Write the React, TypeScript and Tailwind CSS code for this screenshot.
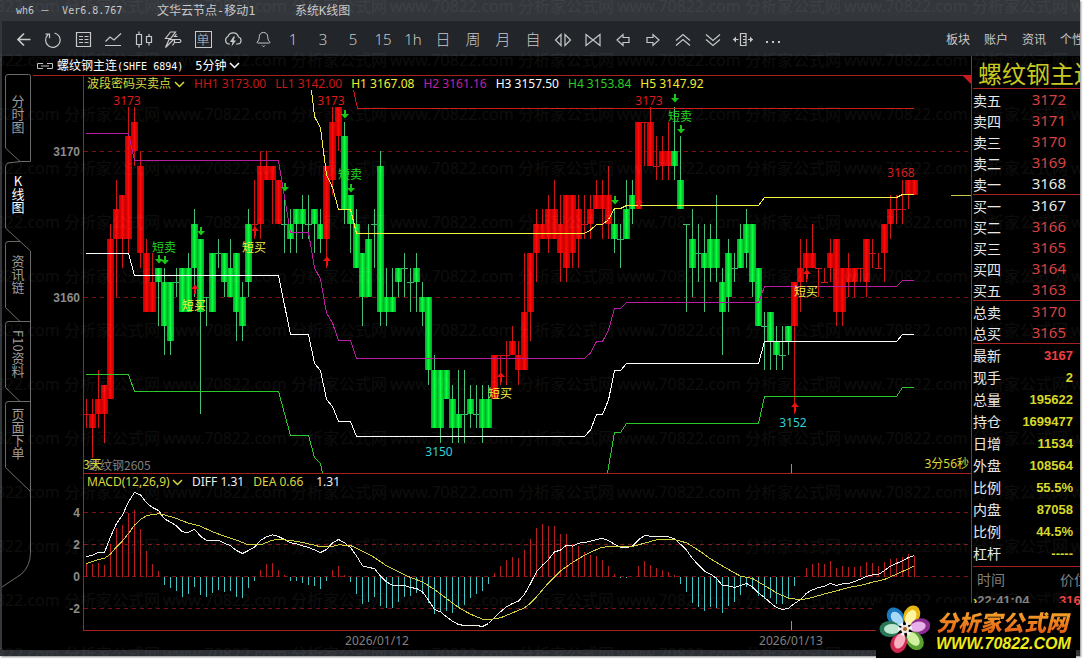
import * as React from "react"
import { Bell } from "lucide-react"

// [side, body top, body bottom, high, low]
type Candle = [string, number, number, number, number]

const CANDLES: Candle[] = [
  ["r", 52, 52, 53, 51], ["r", 52, 51, 53, 49], ["r", 53, 52, 55, 51], ["r", 54, 52, 54, 50], ["r", 64, 53, 65, 53],
  ["r", 66, 64, 68, 60], ["r", 67, 64, 67, 62], ["r", 71, 64, 73, 63], ["r", 72, 70, 73, 69], ["r", 69, 63, 70, 62],
  ["r", 63, 59, 64, 59], ["r", 61, 59, 63, 59], ["g", 62, 61, 62, 58], ["g", 61, 58, 62, 56], ["g", 61, 57, 61, 56],
  ["g", 61, 61, 62, 60], ["g", 62, 59, 62, 59], ["g", 62, 59, 63, 59], ["g", 65, 62, 66, 60], ["g", 64, 59, 64, 52],
  ["g", 60, 60, 60, 58], ["g", 63, 59, 63, 59], ["g", 63, 63, 64, 62], ["g", 63, 61, 63, 60], ["g", 62, 60, 64, 60],
  ["g", 63, 59, 63, 57], ["g", 60, 58, 61, 57], ["g", 65, 61, 66, 60], ["r", 65, 65, 68, 64], ["r", 69, 65, 70, 64],
  ["r", 69, 68, 70, 68], ["r", 69, 68, 69, 65], ["r", 68, 65, 68, 65], ["g", 65, 65, 67, 63], ["g", 65, 64, 66, 63],
  ["g", 66, 65, 66, 63], ["g", 66, 65, 67, 64], ["g", 65, 65, 67, 64], ["g", 66, 65, 66, 63], ["g", 65, 64, 66, 63],
  ["r", 69, 64, 69, 62], ["r", 72, 68, 73, 67], ["r", 73, 71, 73, 70], ["g", 71, 66, 72, 65], ["g", 67, 65, 67, 63],
  ["g", 65, 62, 66, 62], ["g", 63, 60, 63, 58], ["g", 64, 60, 65, 60], ["g", 65, 65, 66, 62], ["g", 69, 59, 70, 58],
  ["g", 60, 59, 62, 58], ["g", 60, 59, 62, 59], ["g", 62, 61, 62, 60], ["g", 62, 62, 63, 60], ["g", 61, 61, 62, 59],
  ["g", 62, 61, 63, 59], ["g", 60, 59, 61, 58], ["g", 60, 55, 60, 54], ["g", 55, 51, 56, 51], ["g", 55, 51, 55, 50],
  ["g", 55, 53, 55, 53], ["g", 53, 51, 54, 50], ["g", 52, 51, 55, 50], ["g", 52, 52, 55, 50], ["g", 53, 52, 54, 51],
  ["g", 52, 52, 54, 51], ["g", 53, 51, 54, 50], ["g", 53, 51, 54, 51], ["r", 56, 53, 56, 53], ["r", 56, 56, 56, 54],
  ["r", 56, 56, 57, 54], ["r", 57, 56, 58, 56], ["r", 56, 55, 57, 54], ["r", 59, 55, 63, 55], ["r", 63, 59, 63, 57],
  ["r", 65, 63, 66, 61], ["r", 65, 64, 66, 64], ["r", 66, 64, 67, 63], ["r", 66, 64, 68, 64], ["r", 65, 63, 67, 61],
  ["r", 67, 62, 67, 61], ["r", 67, 63, 67, 62], ["r", 66, 64, 67, 62], ["r", 65, 65, 67, 64], ["r", 66, 65, 67, 64],
  ["r", 67, 66, 68, 66], ["r", 67, 66, 68, 64], ["r", 67, 65, 69, 64], ["g", 65, 64, 66, 63], ["g", 64, 64, 65, 62],
  ["g", 66, 64, 68, 64], ["g", 67, 66, 68, 65], ["r", 72, 66, 72, 66], ["r", 72, 72, 72, 69], ["r", 72, 69, 73, 69],
  ["r", 69, 69, 71, 68], ["r", 70, 69, 71, 68], ["r", 70, 69, 72, 68], ["g", 70, 69, 73, 68], ["g", 68, 66, 71, 66],
  ["g", 65, 65, 65, 59], ["g", 64, 62, 66, 60], ["g", 63, 63, 65, 61], ["g", 63, 62, 65, 59], ["g", 64, 62, 65, 61],
  ["g", 64, 62, 67, 61], ["g", 61, 59, 62, 56], ["g", 63, 60, 64, 59], ["g", 62, 62, 63, 61], ["g", 64, 62, 65, 62],
  ["g", 65, 63, 66, 62], ["g", 65, 61, 65, 60], ["g", 62, 58, 62, 58], ["g", 58, 58, 59, 55], ["g", 59, 57, 59, 55],
  ["g", 57, 56, 58, 55], ["g", 56, 56, 58, 55], ["g", 58, 57, 58, 56], ["r", 61, 58, 61, 52], ["r", 62, 61, 64, 59],
  ["r", 63, 62, 64, 61], ["r", 63, 62, 65, 62], ["r", 62, 62, 62, 60], ["r", 61, 61, 62, 61], ["r", 63, 62, 64, 61],
  ["r", 64, 59, 64, 58], ["r", 62, 59, 62, 58], ["r", 62, 61, 63, 60], ["r", 62, 61, 62, 60], ["r", 62, 62, 62, 61],
  ["r", 64, 61, 64, 60], ["r", 63, 63, 64, 62], ["r", 62, 62, 63, 62], ["r", 65, 63, 65, 61], ["r", 66, 65, 67, 64],
  ["r", 66, 66, 67, 65], ["r", 66, 66, 68, 65], ["r", 68, 67, 68, 66], ["r", 68, 67, 68, 67],
]

// channel lines
const LINES = [
  { color: "#b81ca0", points: "86,133.5 128.5,133.5 134.5,160.5 278.5,160.5 290.5,232.5 308.5,232.5 314.5,268 320.5,279 326.5,313 332.5,323 338.5,340.5 350.5,340.5 356.5,358.5 584.5,358.5 590.5,353 596.5,341.5 602.5,341.5 608.5,330 614.5,308.5 620.5,308.5 626.5,302.5 758.5,302.5 764.5,286.5 896.5,286.5 902.5,280.5 914,280.5" },
  { color: "#ffffff", points: "86,253.5 128.5,253.5 134.5,275.5 278.5,275.5 290.5,334.5 308.5,334.5 314.5,363.5 320.5,370.5 326.5,399.5 332.5,406.5 338.5,421.5 350.5,421.5 356.5,436.5 584.5,436.5 590.5,430 596.5,414.5 602.5,414.5 608.5,400 614.5,370.5 620.5,370.5 626.5,363.5 758.5,363.5 764.5,341.5 896.5,341.5 902.5,334.5 914,334.5" },
  { color: "#28c828", points: "86,374.5 128.5,374.5 134.5,391.5 278.5,391.5 290.5,435.5 308.5,435.5 314.5,457.5 320.5,463.5 322.5,473" },
  { color: "#28c828", points: "607.5,473 614.5,432.5 620.5,432.5 626.5,423.5 758.5,423.5 764.5,396.5 896.5,396.5 902.5,387.5 914,387.5" },
  { color: "#f4f040", points: "311.5,90 314.5,116.5 320.5,128 326.5,175 332.5,187.5 338.5,209.5 350.5,209.5 356.5,233.5 584.5,233.5 590.5,230 596.5,224.5 602.5,224.5 608.5,219.5 614.5,208.5 620.5,208.5 626.5,205.5 758.5,205.5 764.5,197.5 896.5,197.5 902.5,194.5 914,194.5" },
  { color: "#d01818", points: "353.5,90 357.5,108.5 914,108.5" },
]

// MACD series, zero axis at 409, 48 units per point
const ZERO = 409
const HIST = [
  372, 372, 367, 375, 310, 262, 255, 217, 210, 265, 333, 370, 393, 434, 443, 453, 471, 461, 440, 465, 471, 458, 448, 455,
  452, 470, 474, 443, 422, 390, 372, 369, 390, 404, 422, 422, 429, 435, 437, 446, 422, 390, 378, 404, 426, 461, 491, 486,
  471, 497, 504, 503, 486, 470, 466, 458, 461, 487, 521, 516, 513, 518, 504, 494, 473, 461, 452, 431, 399, 378, 360, 351,
  353, 330, 295, 263, 252, 257, 257, 282, 282, 312, 318, 336, 345, 348, 358, 378, 400, 413, 413, 409, 378, 363, 375, 384,
  389, 396, 405, 432, 455, 489, 500, 513, 500, 502, 518, 498, 486, 465, 440, 447, 468, 477, 474, 490, 492, 473, 438, 409,
  384, 372, 369, 372, 363, 384, 378, 381, 381, 378, 366, 369, 378, 366, 356, 353, 351, 342, 348,
]
const DIFF = [
  349, 345, 337, 337, 290, 250, 225, 185, 157, 164, 188, 202, 211, 236, 246, 257, 275, 277, 267, 288, 301, 301, 301, 309,
  317, 331, 340, 331, 321, 301, 290, 284, 289, 298, 308, 311, 317, 322, 329, 337, 328, 308, 298, 308, 322, 347, 377, 382,
  385, 408, 425, 436, 436, 436, 442, 445, 455, 480, 508, 515, 530, 543, 553, 556, 556, 556, 559, 550, 532, 515, 500, 490,
  483, 462, 430, 395, 375, 358, 335, 330, 315, 318, 309, 307, 303, 298, 295, 301, 312, 321, 322, 318, 299, 286, 288, 289,
  289, 290, 296, 312, 330, 355, 375, 393, 402, 415, 436, 437, 442, 436, 430, 440, 458, 472, 488, 502, 508, 504, 490, 478,
  459, 449, 442, 438, 430, 436, 431, 430, 424, 417, 409, 404, 403, 391, 378, 370, 362, 352, 346,
]
const DEA: [number, number][] = [
  [0, 370], [1, 364], [2, 358], [3, 354], [4, 342], [5, 320], [6, 302], [7, 280], [8, 255], [9, 238], [10, 227],
  [11, 223], [12, 221], [13, 224], [15, 235], [17, 249], [19, 258], [21, 275], [23, 288], [25, 300], [27, 314],
  [29, 314], [31, 300], [32, 298], [34, 301], [36, 307], [38, 315], [39, 320], [41, 319], [42, 314], [44, 316],
  [46, 333], [48, 352], [50, 377], [52, 395], [54, 412], [56, 425], [58, 448], [60, 475], [62, 502], [64, 522],
  [66, 537], [67, 539], [69, 533], [71, 518], [73, 503], [74, 489], [75, 470], [77, 428], [79, 392], [81, 367],
  [83, 345], [85, 328], [86, 321], [88, 319], [91, 319], [93, 309], [95, 299], [98, 298], [100, 308], [102, 330],
  [104, 356], [107, 388], [109, 408], [111, 415], [113, 436], [115, 458], [117, 474], [119, 479], [121, 472],
  [123, 461], [125, 452], [127, 442], [129, 436], [131, 426], [133, 418], [135, 402], [137, 386], [138, 377],
]

const px = (i: number) => 86.5 + i * 6
const py = (p: number) => Math.round((70 - p) * 14.6 + 151)
const my = (v: number) => 576.5 + (v - ZERO) / 3

const DOWN_ARROWS = [[159, 259], [165, 260], [201, 231], [285, 187], [345, 114], [351, 188], [615, 200], [675, 98], [681, 129]]
const UP_ARROWS = [[255, 231], [327, 261], [195, 289], [501, 377], [639, 203], [807, 274], [795, 407]]

const MARKS = [
  { x: 152, y: 252, text: "短卖", color: "#20d820" },
  { x: 338, y: 179, text: "短卖", color: "#20d820" },
  { x: 668, y: 121, text: "短卖", color: "#20d820" },
  { x: 242, y: 252, text: "短买", color: "#f4f040" },
  { x: 182, y: 310, text: "短买", color: "#f4f040" },
  { x: 488, y: 398, text: "短买", color: "#f4f040" },
  { x: 794, y: 296, text: "短买", color: "#f4f040" },
]

const PRICES = [
  { x: 127, y: 105, text: "3173", color: "#d81c1c" },
  { x: 331, y: 105, text: "3173", color: "#d81c1c" },
  { x: 649, y: 105, text: "3173", color: "#d81c1c" },
  { x: 901, y: 177, text: "3168", color: "#d81c1c" },
  { x: 439, y: 456, text: "3150", color: "#30d0d8" },
  { x: 793, y: 427, text: "3152", color: "#30d0d8" },
]

const LEGEND = [
  ["HH1 3173.00", "text-[#c81818]"],
  ["LL1 3142.00", "text-[#c81818]"],
  ["H1 3167.08", "text-[#f0f030]"],
  ["H2 3161.16", "text-[#c020a8]"],
  ["H3 3157.50", "text-white"],
  ["H4 3153.84", "text-[#28d028]"],
  ["H5 3147.92", "text-[#f0f030]"],
]

const ASKS = [["卖五", "3172"], ["卖四", "3171"], ["卖三", "3170"], ["卖二", "3169"], ["卖一", "3168"]]
const BIDS = [["买一", "3167"], ["买二", "3166"], ["买三", "3165"], ["买四", "3164"], ["买五", "3163"]]
const TOTALS = [["总卖", "3170"], ["总买", "3165"]]
const STATS = [
  ["最新", "3167"], ["现手", "2"], ["总量", "195622"], ["持仓", "1699477"], ["日增", "11534"],
  ["外盘", "108564"], ["比例", "55.5%"], ["内盘", "87058"], ["比例", "44.5%"], ["杠杆", "-----"],
]

function Icon({ children }: { children: React.ReactNode }) {
  return (
    <svg width="20" height="20" viewBox="0 0 20 20" fill="none" stroke="currentColor" strokeWidth="1.2">
      {children}
    </svg>
  )
}

const TOOLS: { name: string; face: React.ReactNode }[] = [
  { name: "返回", face: <Icon><path strokeWidth="1.7" d="M17.5 9.5H5M11 3.5L5 9.5l6 6" /></Icon> },
  {
    name: "刷新",
    face: <Icon><path d="M11.5 3A7.3 7.3 0 1 1 4.9 4.8M2.5 4.2h4v4" /></Icon>,
  },
  {
    name: "报价",
    face: <Icon><path d="M3.5 2.5h14v14h-14zM6 6.5h4M11.5 6.5h4M6 9.5h4M11.5 9.5h4M6 12.5h4M11.5 12.5h4" /></Icon>,
  },
  { name: "分时", face: <Icon><path d="M2.5 11.5L7 7l4 3 7-6.5M2 15.5h16" /></Icon> },
  {
    name: "K线",
    face: <Icon><path d="M3.5 4.5h5v10h-5zM6 1.5v3M6 14.5v3M13.5 6.5h5v6h-5zM16 4v2.500M16 12.500v3" /></Icon>,
  },
  {
    name: "闪电下单",
    face: <Icon><path d="M7.5 2L2.500 8.500h4L2.500 17.500l8-8H7L12.500 2zM13.500 4L11.500 6.500h3M11.500 9.500h5.500l1 1.500-1 1.500h-5.500zM11.500 12.500L9.500 15.500" /></Icon>,
  },
  {
    name: "下单",
    face: (
      <span className="flex size-[17px] items-center justify-center border border-current text-[13px] leading-none">单</span>
    ),
  },
  {
    name: "云端",
    face: (
      <Icon>
        <path d="M7 14H5.500a4 4 0 0 1-.500-7.500 5.500 5.500 0 0 1 10.500.500 3.600 3.600 0 0 1-.500 7h-2" />
        <path d="M10.500 6.500L7 12h2.500L8.500 16.500 13 10.500h-2.500l1.500-4z" fill="currentColor" stroke="none" />
      </Icon>
    ),
  },
  { name: "预警", face: <Bell size={17} strokeWidth={1.4} /> },
  { name: "1分钟", face: "1" },
  { name: "3分钟", face: "3" },
  { name: "5分钟", face: "5" },
  { name: "15分钟", face: "15" },
  { name: "1小时", face: "1h" },
  { name: "日线", face: "日" },
  { name: "周线", face: "周" },
  { name: "月线", face: "月" },
  { name: "自定义", face: "自" },
  { name: "缩小", face: <Icon><path d="M8 4.500v11L2.500 10zM12 4.500v11l5.500-5.500z" /></Icon> },
  { name: "放大", face: <Icon><path d="M3 4.500v11L10 10zM17 4.500v11L10 10z" /></Icon> },
  { name: "左移", face: <Icon><path d="M4 10l6-5.500v3h6v5h-6v3z" /></Icon> },
  { name: "右移", face: <Icon><path d="M16 10l-6-5.500v3H4v5h6v3z" /></Icon> },
  { name: "上翻", face: <Icon><path d="M3 10.500l7-6 7 6M3 15.500l7-6 7 6" /></Icon> },
  { name: "下翻", face: <Icon><path d="M3 4.500l7 6 7-6M3 9.500l7 6 7-6" /></Icon> },
  {
    name: "间距",
    face: (
      <Icon>
        <path d="M7.500 3.500h5.500v12H7.500zM10 6.500h3M10 9.500h3M10 12.500h3M0 9.500h5.500M15 9.500h5" />
        <path d="M3 6.500v6L0 9.500zM17 6.500v6l3-3z" fill="currentColor" stroke="none" />
      </Icon>
    ),
  },
  {
    name: "更多",
    face: <Icon><path fill="currentColor" stroke="none" d="M3 11h2v2H3zM9 11h2v2H9zM15 11h2v2h-2z" /></Icon>,
  },
]

function Picker({ label, value }: { label: string; value: string }) {
  return (
    <span className="flex items-center gap-0.5">
      <select aria-label={label} className="appearance-none" defaultValue={value}>
        <option>{value}</option>
      </select>
      <svg width="11" height="7" fill="none" stroke="currentColor" strokeWidth="1.5">
        <path d="M1 1l4.500 4.500L10 1" />
      </svg>
    </span>
  )
}

function SideTabs() {
  return (
    <nav className="relative w-[33px] shrink-0 border-l-2 border-[#33363b] pt-[19px] font-['Noto_Sans_CJK_SC',sans-serif] text-[13px] leading-none text-[#9a9a9a]">
      <svg className="absolute top-0 left-0" width="31" height="594" fill="none" stroke="#6a6a6a">
        <path d="M18 105.500H28.500V20q0-1.500-2-1.500H6q-2.500 0-2.500 2.500v71L18 105.500" />
        <path d="M18 105.500L6 107q-2.500 1-2.500 4v61L28.500 195" />
        <path d="M18 185.500H6q-2.500 0-2.500 3v63L18 265.500M28.500 195v70.500H6q-2.500 0-2.500 3v63L18 345.500M28.500 265v80.500H6q-2.500 0-2.500 3v63l25 24M28.500 345v151q0 14-9 22L0 531" />
      </svg>
      <div className="relative flex flex-col gap-[2px]">
        {["分时图", "K线图", "资讯链", "F10资料", "页面下单"].map((t, i) => (
          <button
            key={t}
            type="button"
            className={
              i === 1
                ? "flex h-[78px] w-8 items-center justify-center text-white [text-orientation:upright] [writing-mode:vertical-rl]"
                : "flex h-[78px] w-8 items-center justify-center [writing-mode:vertical-rl]"
            }
          >
            {t}
          </button>
        ))}
      </div>
    </nav>
  )
}

function PriceChart() {
  return (
    <svg className="block w-full" height="398" role="img" aria-label="K线图">
      <defs>
        <linearGradient id="up">
          <stop offset="0" stopColor="#b40000" />
          <stop offset="0.5" stopColor="#ff0808" />
          <stop offset="1" stopColor="#b40000" />
        </linearGradient>
        <linearGradient id="down">
          <stop offset="0" stopColor="#00a020" />
          <stop offset="0.5" stopColor="#08ff40" />
          <stop offset="1" stopColor="#00a020" />
        </linearGradient>
      </defs>
      <g transform="translate(-33 -75)">
        <g shapeRendering="crispEdges" fill="none">
          <path d="M33 75.500H2000M83.500 75V473" stroke="#a82020" />
          <path d="M84 151.500H2000M84 297.500H2000" stroke="#7c1616" strokeDasharray="4 4" />
          <path d="M791.500 464V473" stroke="#909090" />
          <path d="M951 195.500H2000" stroke="#c8c850" />
        </g>
        <g shapeRendering="crispEdges">
          {CANDLES.map(([side, top, bottom, high, low], i) => {
            const red = side === "r"
            return (
              <g key={i}>
                <line x1={px(i)} x2={px(i)} y1={py(high)} y2={py(low)} stroke={red ? "#d01414" : "#48c078"} />
                <rect
                  x={px(i) - 3.5}
                  y={py(top)}
                  width={7}
                  height={Math.max(py(bottom) - py(top), 1)}
                  fill={top === bottom ? (red ? "#d01414" : "#30c060") : red ? "url(#up)" : "url(#down)"}
                />
              </g>
            )
          })}
        </g>
        <g fill="none" shapeRendering="crispEdges">
          {LINES.map((l, i) => (
            <polyline key={i} points={l.points} stroke={l.color} />
          ))}
        </g>
        {DOWN_ARROWS.map(([x, y], i) => (
          <path key={i} d={`M${x - 1} ${y - 4}h2v4h3l-4 4.500-4-4.500h3z`} fill="#18c818" />
        ))}
        {UP_ARROWS.map(([x, y], i) => (
          <path key={i} d={`M${x - 1} ${y + 5}h2v-5h3l-4-4.500-4 4.500h3z`} fill="#f01010" />
        ))}
        <g className="font-['Noto_Sans_CJK_SC',sans-serif] text-[12px]">
          {MARKS.map((m, i) => (
            <text key={i} x={m.x} y={m.y} fill={m.color}>
              {m.text}
            </text>
          ))}
          <text x="88" y="470" fill="#808080">螺纹钢2605</text>
          <text x="83" y="469" fill="#d8d830">3天</text>
        </g>
        <g className="font-['Noto_Sans',sans-serif] text-[12px]" textAnchor="middle">
          {PRICES.map((m, i) => (
            <text key={i} x={m.x} y={m.y} fill={m.color}>
              {m.text}
            </text>
          ))}
        </g>
        <g className="font-['Liberation_Sans',sans-serif] text-[12px] font-bold" textAnchor="end" fill="#8c8c8c">
          <text x="80" y="156">3170</text>
          <text x="80" y="302">3160</text>
        </g>
      </g>
    </svg>
  )
}

function MacdChart() {
  return (
    <svg className="block w-full" height="177" role="img" aria-label="MACD">
      <g transform="translate(-33 -473)">
        <g shapeRendering="crispEdges" fill="none">
          <path d="M84 512.500H2000M84 544.500H2000M84 576.500H2000M84 608.500H2000" stroke="#7c1616" strokeDasharray="4 4" />
          <path d="M2000 473.500H83.500V630.500H2000" stroke="#a82020" />
          <path d="M791.500 621V630" stroke="#909090" />
          {HIST.map((v, i) => (
            <line key={i} x1={px(i)} x2={px(i)} y1="576.5" y2={my(v)} stroke={v > ZERO ? "#40c4c4" : "#b81c1c"} />
          ))}
          <polyline points={DIFF.map((v, i) => `${px(i)},${my(v)}`).join(" ")} stroke="#f0f0f0" />
          <polyline points={DEA.map(([i, v]) => `${px(i)},${my(v)}`).join(" ")} stroke="#d0d040" />
        </g>
        <g className="font-['Liberation_Sans',sans-serif] text-[12px] font-bold" textAnchor="end" fill="#8c8c8c">
          <text x="80" y="517">4</text>
          <text x="80" y="549">2</text>
          <text x="80" y="581">0</text>
          <text x="80" y="613">-2</text>
        </g>
        <g className="font-['Noto_Sans',sans-serif] text-[12px]" textAnchor="middle" fill="#808080">
          <text x="377" y="645">2026/01/12</text>
          <text x="791" y="645">2026/01/13</text>
        </g>
      </g>
    </svg>
  )
}

function Book({ rows }: { rows: string[][] }) {
  return (
    <div className="border-t border-[#a82020]">
      <table className="w-full">
        <tbody>
          {rows.map(([name, value]) => (
            <tr key={name} className="h-[21px]">
              <th scope="row" className="text-left text-[14px] leading-none font-normal text-[#e8e8e8]">
                {name}
              </th>
              <td
                className={
                  name === "卖一" || name === "买一"
                    ? "pr-3.5 text-right font-['Noto_Sans'] text-[15px] leading-none text-[#e8e8e8]"
                    : "pr-3.5 text-right font-['Noto_Sans'] text-[15px] leading-none text-[#d84040]"
                }
              >
                {value}
              </td>
            </tr>
          ))}
        </tbody>
      </table>
    </div>
  )
}

function Quote() {
  return (
    <aside className="w-[109px] shrink-0 overflow-hidden border-l border-[#a82020] font-['Noto_Sans_CJK_SC',sans-serif]">
      <h2 className="h-8 overflow-hidden pl-1.5 text-[24px] leading-[34px] whitespace-nowrap text-[#c8c820]">螺纹钢主连</h2>
      <div className="pl-px">
        <Book rows={ASKS} />
        <Book rows={BIDS} />
        <Book rows={TOTALS} />
        <div className="border-t border-[#a82020] pb-0.5">
          <table className="w-full">
            <tbody>
              {STATS.map(([name, value], i) => (
                <tr key={i} className="h-[22px]">
                  <th scope="row" className="text-left text-[14px] leading-none font-normal text-[#e8e8e8]">
                    {name}
                  </th>
                  <td
                    className={
                      i === 0
                        ? "pr-[7px] text-right font-['Liberation_Sans'] text-[13px] leading-none font-bold text-[#f04040]"
                        : "pr-[7px] text-right font-['Liberation_Sans'] text-[13px] leading-none font-bold text-[#d8d828]"
                    }
                  >
                    {value}
                  </td>
                </tr>
              ))}
            </tbody>
          </table>
        </div>
        <div className="border-t border-[#a82020]">
          <table className="w-[115px] text-[14px] leading-none text-[#808080]">
            <thead>
              <tr className="h-[23px]">
                <th className="pl-1 text-left font-normal">时间</th>
                <th className="text-right font-normal">价位</th>
              </tr>
            </thead>
            <tbody className="font-['Liberation_Sans'] text-[13px] font-bold">
              <tr className="h-[20px]">
                <td className="whitespace-nowrap">
                  <span className="text-[#d8d828]">›</span>22:41:04
                </td>
                <td className="text-right text-[#f04040]">3167</td>
              </tr>
            </tbody>
          </table>
        </div>
      </div>
    </aside>
  )
}

const PETALS = [
  ["#1878c0", "#a8d8f8", -38],
  ["#e8b810", "#fff4a0", 26],
  ["#8c2c90", "#e8b0e8", 80],
  ["#58a030", "#d0f0a0", 140],
  ["#d02850", "#f8b0c0", 204],
  ["#287858", "#c0e8d0", 270],
] as const

function SiteLogo() {
  return (
    <a href="#" className="absolute right-1 -bottom-0.5 flex h-[55px] w-[200px] items-center bg-black">
      <svg width="56" height="55" viewBox="-29 -26 56 55" className="shrink-0">
        {PETALS.map(([dark, light, angle]) => (
          <g key={angle} transform={`rotate(${angle})`}>
            <ellipse cx="0" cy="-15.500" rx="8" ry="10" fill={dark} />
            <ellipse cx="0" cy="-13" rx="5" ry="8" fill={light} />
            <path d="M0 0L-2 -7h4z" fill="#f4f4f4" />
          </g>
        ))}
        <circle r="4" fill="#f0e8e0" />
        <circle r="2" fill="#a06020" />
      </svg>
      <span className="flex flex-col pl-1 whitespace-nowrap">
        <span className="bg-linear-to-b from-[#f8b030] to-[#e05810] bg-clip-text font-['Noto_Sans_CJK_SC',sans-serif] text-[22px] leading-[26px] font-black text-transparent italic">
          分析家公式网
        </span>
        <span className="font-['Liberation_Sans',sans-serif] text-[16px] leading-5 font-bold text-[#f0e818] italic">
          WWW.70822.COM
        </span>
      </span>
    </a>
  )
}

function Watermark() {
  return (
    <div aria-hidden className="pointer-events-none absolute inset-0 overflow-hidden">
      <div className="-mt-1.5 -ml-16 flex w-max flex-col font-['Noto_Sans','Noto_Sans_CJK_SC',sans-serif] text-[16px] text-white/5">
        {Array.from({ length: 13 }, (_, row) => (
          <div key={row} className="flex h-[54px]">
            {Array.from({ length: 6 }, (_, col) => (
              <span key={col} className="w-[227px] whitespace-nowrap">
                www.70822.com 分析家公式网
              </span>
            ))}
          </div>
        ))}
      </div>
    </div>
  )
}

export default function App() {
  return (
    <div className="h-screen overflow-hidden bg-white pr-1.5 pb-[5px]">
      <div className="relative flex h-full flex-col bg-black shadow-[1px_1px_2px_#888]">
        <header className="flex h-[21px] shrink-0 items-center bg-[#33363b] pl-4 font-['DejaVu_Sans_Mono','Noto_Sans_CJK_SC',monospace] text-[10px] whitespace-pre text-[#c8c8c8]">
          <h1 className="w-[141px]">wh6 －  Ver6.8.767</h1>
          <span className="w-[138px] text-[12px]">文华云节点-移动1</span>
          <span className="text-[12px]">系统K线图</span>
        </header>

        <div className="flex h-[35px] shrink-0 items-center overflow-hidden border-l-2 border-[#33363b] bg-[#22252a] pt-0.5 pl-1.5 font-['Noto_Sans','Noto_Sans_CJK_SC',sans-serif] text-[#c8c8c8]">
          {TOOLS.map((t) => (
            <button
              key={t.name}
              type="button"
              aria-label={t.name}
              className="flex h-8 w-[30px] shrink-0 items-center justify-center text-[15px] leading-none font-light"
            >
              {t.face}
            </button>
          ))}
          <div className="ml-auto flex w-[134px] shrink-0 gap-3.5 overflow-hidden text-[12px] whitespace-nowrap">
            <a href="#">板块</a>
            <a href="#">账户</a>
            <a href="#">资讯</a>
            <a href="#">个性化</a>
          </div>
        </div>

        <main className="flex min-h-0 flex-1">
          <SideTabs />
          <section className="min-w-0 flex-1">
            <div className="flex h-[19px] items-center gap-1 pl-1 font-['DejaVu_Sans_Mono','Noto_Sans_CJK_SC',monospace] text-white">
              <svg width="16" height="6" fill="none" stroke="#c0c0c0">
                <path d="M6 5.500H.500V.500H6M4 3h8M10 .500h5.500v5H10" />
              </svg>
              <span className="text-[12px]">
                螺纹钢主连<span className="text-[10px]">(SHFE 6894)</span>
              </span>
              <span className="pl-2 text-[12px]">
                <Picker label="周期" value="5分钟" />
              </span>
            </div>

            <div className="relative">
              <PriceChart />
              <div className="absolute top-0 left-[54px] flex h-[18px] items-center gap-[9px] font-['Noto_Sans','Noto_Sans_CJK_SC',sans-serif] text-[12px] whitespace-nowrap">
                <span className="text-[#d8d840]">
                  <Picker label="主图指标" value="波段密码买卖点" />
                </span>
                {LEGEND.map(([text, color]) => (
                  <span key={text} className={color}>
                    {text}
                  </span>
                ))}
              </div>
              <svg className="absolute top-0 right-0" width="9" height="9" fill="#c81c1c">
                <path d="M0 0h9v9z" />
              </svg>
              <span className="absolute right-0.5 bottom-0 font-['Noto_Sans','Noto_Sans_CJK_SC',sans-serif] text-[12px] leading-[18px] text-[#d8d830]">
                3分56秒
              </span>
            </div>

            <div className="relative">
              <MacdChart />
              <div className="absolute top-0 left-[54px] flex h-[18px] items-center gap-[9px] font-['Noto_Sans',sans-serif] text-[12px] whitespace-nowrap text-[#f0f0f0]">
                <span className="text-[#d8d840]">
                  <Picker label="副图指标" value="MACD(12,26,9)" />
                </span>
                <span>DIFF 1.31</span>
                <span className="text-[#d8d840]">DEA 0.66</span>
                <span className="pl-1">1.31</span>
              </div>
            </div>
          </section>
          <Quote />
        </main>

        <footer className="h-1.5 shrink-0 bg-[#2c2f34]" />
        <Watermark />
        <SiteLogo />
      </div>
    </div>
  )
}
